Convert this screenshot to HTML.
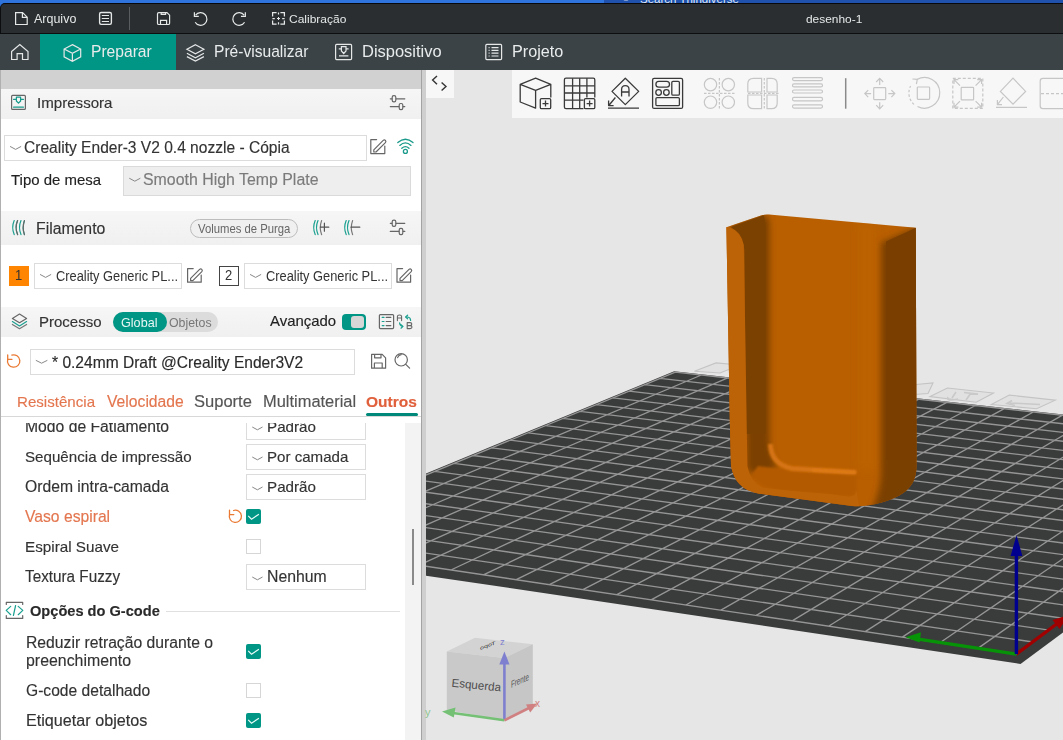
<!DOCTYPE html>
<html><head><meta charset="utf-8">
<style>
*{margin:0;padding:0;box-sizing:border-box}
html,body{width:1063px;height:740px;overflow:hidden;background:#e6e6e6;font-family:"Liberation Sans",sans-serif;position:relative}
.a{position:absolute}
.t{position:absolute;white-space:nowrap;line-height:1}
svg{position:absolute;overflow:visible}
#blue{left:0;top:0;width:1063px;height:10px;background:#2f73dc}
#blue2{left:604px;top:0;width:459px;height:10px;background:#1f51ad}
#title{left:0;top:3px;width:1063px;height:31px;background:#2a2e30;border-top:1px solid #06080b;border-left:1px solid #0c0d0e;border-bottom:1px solid #0c0e0f;border-top-left-radius:5px}
#tabs{left:0;top:34px;width:1063px;height:36px;background:#3b4346}
#tealtab{left:40px;top:34px;width:136px;height:36px;background:#009685}
.tt{color:#e9ecec;font-size:15.5px}
.mt{color:#e6e8e8;font-size:12.2px}
#panel{left:0;top:70px;width:421px;height:670px;background:#fff;border-left:1px solid #b0b0b0}
#graybar{left:1px;top:70px;width:420px;height:19px;background:#d1d1d1}
.hdr{left:1px;width:420px;background:linear-gradient(#f6f6f6,#f0f0f0)}
.txt{color:#333;font-size:15px;-webkit-text-stroke:0.15px currentColor}
.combo{position:absolute;border:1px solid #dcdcdc;background:#fff}
#pborder{left:421px;top:70px;width:1px;height:670px;background:#a3a3a3}
#pborder2{left:422px;top:70px;width:4px;height:670px;background:#cfcfcf}
#view{left:426px;top:70px;width:637px;height:670px;background:#e6e6e6;overflow:hidden}
.ic{stroke:#e6e8e8;fill:none;stroke-width:1.2}
.gi{stroke:#555;fill:none;stroke-width:1.2}
.teal{stroke:#1a9a8a}
.orange{color:#e3764f}
.cb{position:absolute;width:15px;height:15px;border:1px solid #d6d6d6;background:#fff}
.cbc{position:absolute;width:15px;height:15px;background:#009685;border-radius:2px}
</style></head><body>
<div class="a" id="blue"></div>
<div class="a" id="blue2"></div>
<div class="a" style="left:640px;top:-7.5px;font-size:11.5px;color:#dfe8f5;white-space:nowrap;line-height:12px">Search Thingiverse</div>
<svg style="left:0;top:0" width="700" height="4"><circle cx="626" cy="-5" r="5" fill="none" stroke="#dfe8f5" stroke-width="1.2"/></svg>
<div class="a" id="title"></div>
<div class="a" id="tabs"></div>
<div class="a" id="tealtab"></div>

<!-- title bar items -->
<svg style="left:0;top:0" width="300" height="34">
 <g class="ic">
  <path d="M15.6 12.6h7l4.6 4.6v7.3h-11.6z M22.4 12.6v4.8h4.8"/>
  <rect x="99.6" y="12.5" width="11.8" height="11.8" rx="1.5" stroke-width="1.35"/>
  <path d="M101.8 15.5h7.2 M101.8 18.5h7.2 M101.8 21.5h7.2" stroke-width="1.1"/>
  <path d="M158.8 12.6h8.2l2.6 2.6v8q0 1.3-1.3 1.3h-9.5q-1.3 0-1.3-1.3v-9.3q0-1.3 1.3-1.3z M161.2 12.6v1.8h4.4v-1.8 M160.5 24.5v-4.2h6.1v4.2"/>
  <path d="M195.6 15.2A6.3 6.3 0 1 1 195.2 22.2 M194.4 12.2V16.4H198.8"/>
  <path d="M244.15 15.2A6.3 6.3 0 1 0 244.55 22.2 M245.35 12.2V16.4H240.95"/>
  <path d="M272.6 16.6v-4h4 M280.4 12.6h4v4 M284.4 20.4v3.8h-4 M276.6 24.2h-4v-3.8 M278.5 12.4v2.2 M278.5 22.2v2.2 M272.4 18.5h2.4 M282.2 18.5h2.4" stroke-width="1.25"/>
  <path d="M278.5 17v3 M277 18.5h3" stroke-width="1"/>
 </g>
</svg>
<div class="t mt" style="left:34.20px;top:13.35px;font-size:12.30px;transform:scaleX(1.0150);transform-origin:0 0">Arquivo</div>
<div class="t mt" style="left:289.00px;top:13.15px;font-size:11.70px;transform:scaleX(1.0260);transform-origin:0 0">Calibração</div>
<div class="t mt" style="left:806.00px;top:13.15px;font-size:11.70px;transform:scaleX(1.0190);transform-origin:0 0">desenho-1</div>
<div class="a" style="left:129px;top:7px;width:1px;height:23px;background:#585d5f"></div>

<!-- tab bar items -->
<svg style="left:0;top:0" width="560" height="70">
 <g class="ic">
  <path d="M11.6 51.5l8.2-7l8.2 7v8h-5.5v-5.8h-5.4v5.8h-5.5z"/>
  <path d="M72.4 44.6l8.3 4.4v7.9l-8.3 4.4l-8.3-4.4v-7.9z M64.1 49l8.3 4.3l8.3-4.3 M72.4 53.3v7.9"/>
  <path d="M195.4 44.8l8.5 4.5l-8.5 4.5l-8.5-4.5z M186.9 53.2l8.5 4.5l8.5-4.5 M186.9 56.6l8.5 4.5l8.5-4.5"/>
  <rect x="335.6" y="44.4" width="16" height="15.2" rx="1"/>
  <path d="M339 55.8h9.4 M338.8 48.8h2.6 M346 48.8h2.6 M341.4 46.6h4.6v4.4l-2.3 2.5l-2.3-2.5z"/>
  <rect x="485.8" y="44.4" width="15.8" height="15.2" rx="1"/>
  <path d="M491.5 47.6h7 M491.5 50.4h7 M491.5 53.2h7 M491.5 56h7 M488.6 47.6h1 M488.6 50.4h1 M488.6 53.2h1 M488.6 56h1"/>
 </g>
</svg>
<div class="t tt" style="left:91.00px;top:43.28px;font-size:16.43px;transform:scaleX(0.9509);transform-origin:0 0">Preparar</div>
<div class="t tt" style="left:214.40px;top:43.28px;font-size:16.43px;transform:scaleX(0.9491);transform-origin:0 0">Pré-visualizar</div>
<div class="t tt" style="left:362.00px;top:43.28px;font-size:16.43px;transform:scaleX(1.0028);transform-origin:0 0">Dispositivo</div>
<div class="t tt" style="left:512.40px;top:43.28px;font-size:16.43px;transform:scaleX(0.9849);transform-origin:0 0">Projeto</div>

<!-- panel -->
<div class="a" id="panel"></div>
<div class="a" id="graybar"></div>
<div class="a hdr" style="top:89px;height:30px"></div>
<div class="t txt" style="left:36.60px;top:95.24px;font-size:15.52px;transform:scaleX(0.9729);transform-origin:0 0">Impressora</div>

<div class="combo" style="left:4px;top:135px;width:363px;height:26px"></div>
<div class="t txt" style="left:24.30px;top:139.48px;font-size:16.04px;transform:scaleX(0.9710);transform-origin:0 0">Creality Ender-3 V2 0.4 nozzle - Cópia</div>
<div class="t txt" style="left:11.30px;top:172.24px;color:#222;font-size:15.52px;transform:scaleX(0.9643);transform-origin:0 0">Tipo de mesa</div>
<div class="combo" style="left:123px;top:166px;width:288px;height:30px;background:#eeeeee;border-color:#dadada"></div>
<div class="t txt" style="left:142.90px;top:171.38px;color:#7b7b7b;font-size:16.25px;transform:scaleX(0.9778);transform-origin:0 0">Smooth High Temp Plate</div>

<div class="a hdr" style="top:211px;height:34px"></div>
<div class="t txt" style="left:36.30px;top:220.48px;font-size:16.04px;transform:scaleX(0.9845);transform-origin:0 0">Filamento</div>
<div class="a" style="left:190px;top:219px;width:108px;height:19px;border:1px solid #bdbdbd;border-radius:10px;background:#f0f0f0"></div>
<div class="t" style="left:198.40px;top:223.45px;font-size:12.10px;color:#666;transform:scaleX(0.9343);transform-origin:0 0">Volumes de Purga</div>

<div class="a" style="left:9px;top:266px;width:20px;height:20px;background:#ff8400"></div>
<div class="t" style="left:15.00px;top:268.48px;font-size:14.04px;color:#333;transform:scaleX(0.9259);transform-origin:0 0">1</div>
<div class="combo" style="left:34px;top:263px;width:148px;height:26px"></div>
<div class="t" style="left:55.50px;top:269.59px;font-size:13.82px;color:#333;transform:scaleX(0.9296);transform-origin:0 0">Creality Generic PL...</div>
<div class="a" style="left:219px;top:266px;width:20px;height:20px;border:1px solid #444;background:#fff"></div>
<div class="t" style="left:225.00px;top:268.48px;font-size:14.04px;color:#333;transform:scaleX(0.9259);transform-origin:0 0">2</div>
<div class="combo" style="left:244px;top:263px;width:148px;height:26px"></div>
<div class="t" style="left:265.50px;top:269.59px;font-size:13.82px;color:#333;transform:scaleX(0.9296);transform-origin:0 0">Creality Generic PL...</div>

<div class="a hdr" style="top:307px;height:30px"></div>
<div class="t txt" style="left:38.80px;top:314.44px;font-size:15.11px;transform:scaleX(0.9923);transform-origin:0 0">Processo</div>
<div class="a" style="left:113px;top:312px;width:105px;height:20px;border-radius:10px;background:#dcdcdc"></div>
<div class="a" style="left:113px;top:312px;width:54px;height:20px;border-radius:10px;background:#009685"></div>
<div class="t" style="left:121.00px;top:316.52px;font-size:12.96px;color:#e8f6f4;transform:scaleX(0.9741);transform-origin:0 0">Global</div>
<div class="t" style="left:168.80px;top:316.52px;font-size:12.96px;color:#777;transform:scaleX(0.9537);transform-origin:0 0">Objetos</div>
<div class="t txt" style="left:270.30px;top:313.34px;font-size:15.32px;color:#222;transform:scaleX(0.9749);transform-origin:0 0">Avançado</div>
<div class="a" style="left:342px;top:314px;width:24px;height:16px;border-radius:4px;background:#009685"></div>
<div class="a" style="left:351px;top:316px;width:13px;height:12px;border-radius:3px;background:#d6d6d6"></div>

<div class="combo" style="left:30px;top:349px;width:325px;height:26px"></div>
<div class="t txt" style="left:51.80px;top:355.13px;font-size:15.73px;color:#2a2a2a;transform:scaleX(0.9903);transform-origin:0 0">* 0.24mm Draft @Creality Ender3V2</div>

<div class="t txt orange" style="left:16.60px;top:394.34px;font-size:15.32px;transform:scaleX(0.9865);transform-origin:0 0">Resistência</div>
<div class="t txt orange" style="left:106.70px;top:394.08px;font-size:15.84px;transform:scaleX(0.9913);transform-origin:0 0">Velocidade</div>
<div class="t txt" style="left:193.60px;top:394.08px;font-size:15.84px;color:#555;transform:scaleX(1.0444);transform-origin:0 0">Suporte</div>
<div class="t txt" style="left:262.80px;top:393.72px;font-size:16.56px;color:#555;transform:scaleX(0.9932);transform-origin:0 0">Multimaterial</div>
<div class="t txt" style="left:366.00px;top:394.29px;font-size:15.42px;font-weight:bold;color:#e0603c;transform:scaleX(1.0077);transform-origin:0 0">Outros</div>
<div class="a" style="left:366px;top:413px;width:52px;height:3px;border-radius:2px;background:#00897a"></div>
<div class="a" style="left:1px;top:416px;width:420px;height:1px;background:#d8d8d8"></div>

<!-- settings list -->
<div class="a" style="left:1px;top:423px;width:404px;height:317px;overflow:hidden">
 <div class="t txt" style="left:24.40px;top:-4.52px;font-size:16.04px;transform:scaleX(0.9797);transform-origin:0 0">Modo de Fatiamento</div>
 <div class="t txt" style="left:24.40px;top:26.24px;font-size:15.52px;transform:scaleX(0.9758);transform-origin:0 0">Sequência de impressão</div>
 <div class="t txt" style="left:24.40px;top:55.48px;font-size:16.04px;transform:scaleX(0.9797);transform-origin:0 0">Ordem intra-camada</div>
 <div class="t txt orange" style="left:24.40px;top:86.13px;font-size:15.73px;transform:scaleX(0.9971);transform-origin:0 0">Vaso espiral</div>
 <div class="t txt" style="left:24.40px;top:116.24px;font-size:15.52px;transform:scaleX(0.9816);transform-origin:0 0">Espiral Suave</div>
 <div class="t txt" style="left:24.40px;top:146.13px;font-size:15.73px;transform:scaleX(0.9720);transform-origin:0 0">Textura Fuzzy</div>
 <div class="combo" style="left:245px;top:-7px;width:120px;height:24px"></div>
 <div class="t txt" style="left:265.50px;top:-3.71px;font-size:15.42px;transform:scaleX(0.9865);transform-origin:0 0">Padrão</div>
 <div class="combo" style="left:245px;top:21px;width:120px;height:26px"></div>
 <div class="t txt" style="left:265.50px;top:26.29px;font-size:15.42px;transform:scaleX(0.9797);transform-origin:0 0">Por camada</div>
 <div class="combo" style="left:245px;top:51px;width:120px;height:26px"></div>
 <div class="t txt" style="left:265.50px;top:56.29px;font-size:15.42px;transform:scaleX(0.9865);transform-origin:0 0">Padrão</div>
 <div class="combo" style="left:245px;top:141px;width:120px;height:26px"></div>
 <div class="t txt" style="left:265.50px;top:146.08px;font-size:15.84px;transform:scaleX(0.9971);transform-origin:0 0">Nenhum</div>
 <div class="cbc" style="left:245px;top:86px"><svg style="left:0;top:0" width="15" height="15"><path d="M2.2 6.8l3.3 3.4l7.4-5" fill="none" stroke="#e6fbf8" stroke-width="1.2"/></svg></div>
 <div class="cb" style="left:245px;top:116px"></div>
 <div class="t txt" style="left:29.00px;top:180.44px;font-weight:bold;font-size:15.11px;color:#2a2a2a;transform:scaleX(0.9662);transform-origin:0 0">Opções do G-code</div>
 <div class="a" style="left:165px;top:188px;width:234px;height:1px;background:#e0e0e0"></div>
 <div class="t txt" style="left:24.50px;top:211.48px;font-size:16.04px;transform:scaleX(0.9807);transform-origin:0 0">Reduzir retração durante o</div>
 <div class="t txt" style="left:24.50px;top:229.43px;font-size:16.15px;transform:scaleX(0.9845);transform-origin:0 0">preenchimento</div>
 <div class="t txt" style="left:24.50px;top:259.48px;font-size:16.04px;transform:scaleX(0.9739);transform-origin:0 0">G-code detalhado</div>
 <div class="t txt" style="left:24.50px;top:289.27px;font-size:16.46px;transform:scaleX(0.9836);transform-origin:0 0">Etiquetar objetos</div>
 <div class="cbc" style="left:245px;top:221px"><svg style="left:0;top:0" width="15" height="15"><path d="M2.2 6.8l3.3 3.4l7.4-5" fill="none" stroke="#e6fbf8" stroke-width="1.2"/></svg></div>
 <div class="cb" style="left:245px;top:260px"></div>
 <div class="cbc" style="left:245px;top:290px"><svg style="left:0;top:0" width="15" height="15"><path d="M2.2 6.8l3.3 3.4l7.4-5" fill="none" stroke="#e6fbf8" stroke-width="1.2"/></svg></div>
</div>
<div class="a" style="left:405px;top:423px;width:16px;height:317px;background:#f3f3f3"></div>
<div class="a" style="left:412px;top:529px;width:2px;height:56px;background:#8a8a8a"></div>


<!-- panel icons -->
<svg style="left:0;top:0" width="426" height="740">
 <g fill="none" stroke-width="1.2" stroke-linecap="round" stroke-linejoin="round">
  <!-- printer icon -->
  <rect x="11.6" y="95.4" width="13.8" height="14" rx="1" stroke="#666"/>
  <path d="M13.6 99.4h2.8 M20.6 99.4h2.8 M16.4 97.2h4.2v3.8l-2.1 2.2l-2.1-2.2z M13.6 107.2h9.8" stroke="#14998a"/>
  <!-- settings sliders (printer) -->
  <path d="M390.3 98.8H404.8 M390.3 106.6H404.8" stroke="#666"/>
  <rect x="392.2" y="95.6" width="3.6" height="6.2" rx="1.6" fill="#f3f3f3" stroke="#666"/>
  <rect x="399.2" y="103.5" width="3.6" height="6.2" rx="1.6" fill="#f3f3f3" stroke="#666"/>
  <!-- combo chevrons -->
  <path d="M10.4 146.6l5.2 2.8l5.2-2.8" stroke="#888" stroke-width="1"/>
  <path d="M129.6 178.4l5.2 2.8l5.2-2.8" stroke="#888" stroke-width="1"/>
  <!-- edit icon -->
  <path d="M376.6 139.6h-5.8v14h14v-7.6" stroke="#666"/>
  <path d="M373.8 149.8l9.4-9.4q1.2-1 2.2 0q1 1-0 2.2l-9.4 9.4h-2.2z" stroke="#666"/>
  <!-- wifi -->
  <path d="M397.8 142.6q7.6-6.8 15.2 0 M399.8 145.4q5.6-5 11.2 0 M401.8 148.2q3.6-3.2 7.2 0" stroke="#1a9a8a" stroke-width="1.3"/>
  <circle cx="405.4" cy="151.4" r="2" stroke="#1a9a8a" stroke-width="1.3"/>
  <!-- filament icon -->
  <path d="M14.2 220.6q-3 7 0 14 M17.6 220.6q-3 7 0 14 M21 220.6q-3 7 0 14 M24.4 220.6q-2.4 7 0 14" stroke="#1aa090"/>
  <path d="M17.6 220.6q-3 7 0 14 M24.4 220.6q-2.4 7 0 14" stroke="#666"/>
  <!-- filament add/remove -->
  <path d="M315.2 220.6q-3 7 0 14 M318 220.6q-3 7 0 14" stroke="#1aa090"/>
  <path d="M321.6 220.6q-2.6 7 0 14" stroke="#777"/>
  <path d="M320.4 227.2h8.4 M324.4 223.2v8" stroke="#555"/>
  <path d="M346.2 220.6q-3 7 0 14 M349 220.6q-3 7 0 14" stroke="#1aa090"/>
  <path d="M352.6 220.6q-2.6 7 0 14" stroke="#777"/>
  <path d="M351 227.2h8.8" stroke="#555"/>
  <!-- settings sliders (filament) -->
  <path d="M390.3 223.3H404.8 M390.3 231.4H404.8" stroke="#666"/>
  <rect x="392.2" y="220.2" width="3.6" height="6.2" rx="1.6" fill="#f2f2f2" stroke="#666"/>
  <rect x="399.2" y="228.4" width="3.6" height="6.2" rx="1.6" fill="#f2f2f2" stroke="#666"/>
  <!-- filament combos chevrons + edit -->
  <path d="M40.4 274.6l5.2 2.8l5.2-2.8" stroke="#888" stroke-width="1"/>
  <path d="M250.4 274.6l5.2 2.8l5.2-2.8" stroke="#888" stroke-width="1"/>
  <path d="M193.2 268.6h-5.6v13.6h13.6v-7.2" stroke="#666"/>
  <path d="M190.6 278.4l9-9q1.2-1 2.2 0q1 1 0 2.2l-9 9h-2.2z" stroke="#666"/>
  <path d="M402.6 268.6h-5.6v13.6h13.6v-7.2" stroke="#666"/>
  <path d="M400 278.4l9-9q1.2-1 2.2 0q1 1 0 2.2l-9 9h-2.2z" stroke="#666"/>
  <!-- layers icon -->
  <path d="M12.4 318.4l7.1-4.4l7.1 4.4l-7.1 4.3z" stroke="#666"/>
  <path d="M12.4 321.6l7.1 4.4l7.1-4.4" stroke="#1aa090"/>
  <path d="M12.4 324.4l7.1 4.3l7.1-4.3" stroke="#777"/>
  <!-- list icon -->
  <rect x="379.4" y="314.6" width="14.2" height="14" rx="1" stroke="#666"/>
  <path d="M382.2 317.4h1.8 M382.2 321.5h1.8 M382.2 325.6h1.8" stroke="#1aa090"/>
  <path d="M386.2 317.4h4.6 M386.2 321.5h4.6 M386.2 325.6h4.6" stroke="#666"/>
  <!-- AB icon -->
  <path d="M397.4 320.6v-4q0-1.6 2.1-1.6q2.1 0 2.1 1.6v4 M397.4 318h4.2" stroke="#666" stroke-width="1.1"/>
  <path d="M407.2 328.6v-6h2.8q1.8 0 1.8 1.5q0 1.5-1.8 1.5h-2.8 M410 325.6q2 0 2 1.5q0 1.5-2 1.5h-2.8" stroke="#666" stroke-width="1.1"/>
  <path d="M410.6 320.4q0-3-3-3.4 M405.6 317l2-1.8 M405.6 317l2 1.8 M399.6 322.8q0 3 3.2 3.6 M403 326.4l-2 1.8 M403 326.4l-2-1.8" stroke="#1aa090" stroke-width="1.2"/>
  <!-- reset orange -->
  <path d="M7.7 359.3A6.2 6.2 0 1 0 11.8 355.1" stroke="#ea7a33" stroke-width="1.3"/>
  <path d="M7.7 354.9V359.3H12" stroke="#ea7a33" stroke-width="1.3"/>
  <path d="M36.2 360.5l5.4 2.7l5.4-2.7" stroke="#888" stroke-width="1"/>
  <!-- save -->
  <path d="M371.6 354.4h10.6l3.4 3.4v10.4h-14z M374.6 354.4v3.4h6.4v-3.4 M374.4 368.2v-5.2h7.8v5.2" stroke="#666"/>
  <!-- search -->
  <circle cx="401.2" cy="359.8" r="6.2" stroke="#666"/>
  <path d="M405.8 364.4l3.8 3.8 M397.6 357.6q1-2.6 3.6-3" stroke="#666"/>
  <!-- row chevrons -->
  <path d="M252.6 427.2l4.8 2.6l4.8-2.6" stroke="#888" stroke-width="1"/>
  <path d="M252.6 457.2l4.8 2.6l4.8-2.6" stroke="#888" stroke-width="1"/>
  <path d="M252.6 487.2l4.8 2.6l4.8-2.6" stroke="#888" stroke-width="1"/>
  <path d="M252.6 577.2l4.8 2.6l4.8-2.6" stroke="#888" stroke-width="1"/>
  <!-- reset orange (vaso) -->
  <path d="M229.5 514.6A6.1 6.1 0 1 0 233.6 510.5" stroke="#ea7a33" stroke-width="1.3"/>
  <path d="M229.5 510.2V514.6H233.8" stroke="#ea7a33" stroke-width="1.3"/>
  <!-- gcode icon -->
  <path d="M6.3 604.4v-2h16.4v2 M6.3 615.6v2.8h16.4v-2.8" stroke="#666"/>
  <path d="M10.7 606.4l-4.5 4l4.5 4.3 M18.2 606.4l4.6 4l-4.6 4.3 M15.6 605.5l-2.2 10" stroke="#1aa090"/>
 </g>
</svg>
<div class="a" id="pborder"></div>
<div class="a" id="pborder2"></div>
<div class="a" id="view"></div>
<svg style="left:426px;top:70px" width="637" height="670" viewBox="426 70 637 670"><defs><clipPath id="vc"><rect x="426" y="70" width="637" height="670"/></clipPath><linearGradient id="gl" x1="0" x2="1" y1="0" y2="0"><stop offset="0" stop-color="#7a3f00"/><stop offset="0.7" stop-color="#7e4200"/><stop offset="1" stop-color="#b95f00"/></linearGradient><linearGradient id="gr" x1="0" x2="1" y1="0" y2="0"><stop offset="0" stop-color="#b55c00"/><stop offset="0.25" stop-color="#7c4100"/><stop offset="1" stop-color="#7a3f00"/></linearGradient><linearGradient id="gfl" x1="0" x2="0" y1="0" y2="1"><stop offset="0" stop-color="#7c4100"/><stop offset="1" stop-color="#b05800"/></linearGradient></defs><g clip-path="url(#vc)">
<polygon fill="#3a3b3b" points="674.2,371.2 1310.5,442.0 1310.5,450.0 1020.5,663.9 258.0,550.7 258.0,542.7"/>
<g fill="#e1e1e1" stroke="#c4c4c4" stroke-width="1.1"><path d="M916 384.5 L933 383 L928 393.5 L914 394.5z"/><path d="M930.1 396.6 L947.4 388 L993.5 393 L976.2 402.3z"/><path d="M991.3 404.5 L1009.3 395.1 L1055.3 400.2 L1036.6 408.8z"/><path d="M694.4 371.2 L716 362.9 L740 365 L720 373z"/></g>
<g fill="none" stroke="#c9c9c9" stroke-width="1.6"><path d="M948 397 q-2 3 4 3 l6-1 M956 392 l-4 6 M964 392.5 l14 1.6 M971 393 l-5 7"/><path d="M1012 400.5 l-5 3 l8 2 M1010 403 l30 1.5"/></g>
<path stroke="#959595" stroke-width="1.35" fill="none" d="M1016.3,654.1L263.3,542.1M1016.3,654.1L1306.3,442.4M1032.9,642.0L286.4,532.6M977.9,648.4L1274.8,438.9M1049.2,630.1L309.0,523.3M939.9,642.7L1243.7,435.4M1065.0,618.5L331.1,514.2M902.3,637.1L1212.8,432.0M1080.4,607.3L352.7,505.3M865.2,631.6L1182.2,428.6M1095.5,596.3L373.8,496.5M828.5,626.2L1151.9,425.2M1110.3,585.5L394.5,488.0M792.2,620.8L1121.8,421.8M1124.6,575.0L414.8,479.6M756.3,615.4L1092.0,418.5M1138.7,564.7L434.7,471.4M720.9,610.2L1062.5,415.2M1152.4,554.7L454.1,463.4M685.8,605.0L1033.3,412.0M1165.9,544.9L473.2,455.5M651.1,599.8L1004.3,408.7M1179.0,535.3L491.9,447.8M616.8,594.7L975.5,405.5M1191.8,525.9L510.2,440.2M582.9,589.7L947.0,402.4M1204.4,516.8L528.2,432.8M549.4,584.7L918.8,399.2M1216.7,507.8L545.8,425.6M516.2,579.7L890.8,396.1M1228.7,499.0L563.0,418.4M483.4,574.9L863.0,393.0M1240.5,490.4L580.0,411.4M450.9,570.0L835.5,389.9M1252.0,482.0L596.6,404.6M418.8,565.3L808.2,386.9M1263.3,473.7L612.9,397.8M387.1,560.5L781.2,383.9M1274.4,465.7L629.0,391.2M355.6,555.9L754.4,380.9M1285.3,457.7L644.7,384.7M324.6,551.2L727.8,377.9M1295.9,450.0L660.1,378.4M293.8,546.7L701.4,375.0M1306.3,442.4L675.3,372.1M263.3,542.1L675.3,372.1"/>
<path d="M1016.3 654.1 L1070 614" stroke="#a00000" stroke-width="3.2"/><path d="M1052.5 620 L1059.5 629 L1069 615z" fill="#a00000"/>
<path d="M1016.3 654.1 L915 638.6" stroke="#079307" stroke-width="3.2"/><path d="M905.5 637.2 L921 632.2 L919.6 642.4z" fill="#079307"/>
<path d="M1016.4 654.1 V553" stroke="#00008f" stroke-width="3.4"/><path d="M1016.5 535.3 L1022.4 556 L1010.6 556z" fill="#00008f"/>
<g><defs><clipPath id="vs"><path d="M726.4 227.2 L761 215.6 Q765 214.2 769 214.6 L915.8 227.8 L916.5 466 C916.5 489 901 498 874 504.5 Q863 507 852 506 L758 493.5 Q735 489 731 466 L729.8 420 Z"/></clipPath><filter id="b2" x="-50%" y="-50%" width="200%" height="200%"><feGaussianBlur stdDeviation="2.2"/></filter><filter id="b3" x="-50%" y="-50%" width="200%" height="200%"><feGaussianBlur stdDeviation="3.2"/></filter><filter id="b1" x="-50%" y="-50%" width="200%" height="200%"><feGaussianBlur stdDeviation="1.3"/></filter><filter id="b4" x="-50%" y="-50%" width="200%" height="200%"><feGaussianBlur stdDeviation="4"/></filter></defs><path fill="#b95f00" d="M726.4 227.2 L761 215.6 Q765 214.2 769 214.6 L915.8 227.8 L916.5 466 C916.5 489 901 498 874 504.5 Q863 507 852 506 L758 493.5 Q735 489 731 466 L729.8 420 Z"/><g clip-path="url(#vs)"><path fill="#c06604" filter="url(#b4)" d="M858 222 L876 224 L876 470 L858 470 Z" opacity="0.5"/><path fill="#7a3f00" filter="url(#b3)" d="M881 242.6 L920 226 L922 520 L866 520 Q879 500 881 476 Z"/><path fill="#7a3f00" d="M886 241.5 L920 226 L922 460 L886 460 Z"/><path fill="#7b4100" filter="url(#b3)" d="M730 227 L764.2 214.8 Q769 216 769.5 224 L769.5 440 Q770 458 778 466 L760 476 L746.5 470 L745 250 Z"/><path fill="#7b4100" d="M731 227 L764 215.2 L765.5 225 L765.5 434 L746 434 L744.5 250 Q744 236 731 227 Z"/><path fill="#b35a00" filter="url(#b1)" d="M758 466 Q772 468 792 471 L856.8 474 L856.8 488 Q856 496 848 496.5 L775 489.5 Q757 486 752 474 Z"/><path fill="none" stroke="#d67412" stroke-width="5" filter="url(#b1)" d="M770.5 444 Q771 464 792 468.5 L856 472.5"/><path fill="none" stroke="#e07c18" stroke-width="2.5" filter="url(#b1)" d="M812 470 L856 472.6"/><path fill="#bc6207" d="M720 226 L729.2 227.2 Q741 231 743.8 245 L747.4 466 Q750 482 763 487.5 Q790 491 830 494 L848 496.5 Q856 497 856.8 490 L856.8 492 L860 510 L720 510 Z"/></g></g>
</g></svg>
<svg style="left:0;top:0" width="1063" height="740">
<polygon points="446.8,651.6 475,637.8 532.8,644.3 504.4,658" fill="#d3d3d3"/>
<polygon points="446.8,651.6 504.4,658 504.4,720.6 446.8,710" fill="#c9c9c9"/>
<polygon points="504.4,658 532.8,644.3 532.8,706 504.4,720.6" fill="#c6c6c6"/>
<text x="451.5" y="689" font-size="11.6" fill="#4e4e4e" transform="rotate(5.5 476 685)" font-family="Liberation Sans">Esquerda</text>
<g transform="translate(511 688) matrix(0.62 -0.28 0 1 0 0)"><text x="0" y="0" font-size="10" fill="#555" font-family="Liberation Sans">Frente</text></g>
<g transform="translate(480 650) matrix(0.8 -0.3 0 0.55 0 0)"><text x="0" y="0" font-size="9" fill="#333" font-family="Liberation Sans" transform="scale(-1 1)" text-anchor="end">Topo</text></g>
<path d="M504.4 720 V664" stroke="#7f7fcf" stroke-width="2.6"/><path d="M504.4 651.5 L509.5 664.5 L499.3 664.5z" fill="#7f7fcf"/>
<text x="500" y="645" font-size="9.5" fill="#7f7fcf" font-family="Liberation Sans">z</text>
<path d="M504.4 720.3 L453 713" stroke="#74c074" stroke-width="2.6"/><path d="M442 711.5 L455.5 707.4 L453.8 717.6z" fill="#74c074"/>
<text x="425" y="716" font-size="11" fill="#8fc48f" font-family="Liberation Sans">y</text>
<path d="M504.4 720.3 L530 707.5" stroke="#d08080" stroke-width="2.6"/><path d="M537.2 703.6 L530.2 712.4 L526 704.6z" fill="#d08080"/>
<text x="535" y="707" font-size="10" fill="#d08080" font-family="Liberation Sans">x</text>
</svg>
<div class="a" style="left:426px;top:70px;width:28px;height:28px;background:#f7f7f7"></div>
<div class="a" style="left:512px;top:70px;width:551px;height:48px;background:#f7f7f7"></div>
<svg style="left:0;top:0" width="1063" height="130">
<path d="M437 76 L432.6 80 L437 84.2 M441.6 82.4 L446 86.5 L441.6 90.6" stroke="#333" stroke-width="1.4" fill="none"/>
<g fill="none" stroke="#3a3a3a" stroke-width="1.3" stroke-linejoin="round">
 <path d="M520.2 84.4 L535.6 78.2 L550.8 84.4 L535.6 90.3 Z M520.2 84.4 V102 L535.6 108.2 V90.3 M550.8 84.4 V97.5"/>
 <rect x="540.3" y="98.6" width="10.4" height="10" rx="1.2"/><path d="M545.5 100.6 v6 M542.5 103.6 h6"/>
 <path d="M583.5 108.6 H566 Q564.4 108.6 564.4 107 V79.8 Q564.4 78.2 566 78.2 H593.2 Q594.8 78.2 594.8 79.8 V97.6"/>
 <path d="M572.6 78.2 V108.6 M579.7 78.2 V108.6 M586.9 78.2 V97.6 M564.4 85.9 H594.8 M564.4 93 H594.8 M564.4 100.2 H583.5"/>
 <rect x="584.4" y="98.6" width="10.4" height="10" rx="1.2"/><path d="M589.6 100.6 v6 M586.6 103.6 h6"/>
 <path d="M625.3 78.2 L638.7 91.4 L625.3 104.6 L612 91.4 Z M608 108.2 H639 M615.4 97.5 L608.8 105.5 M608.6 100.6 V105.6 H613.6"/>
 <path d="M621.6 96.5 V89.5 Q621.6 85.6 625.3 85.6 Q629 85.6 629 89.5 V96.5 M621.6 92 H629"/>
 <rect x="652.6" y="78.4" width="30" height="30" rx="1.5"/>
 <rect x="655.9" y="81.4" width="13.6" height="5.8" rx="2.9"/>
 <circle cx="658.6" cy="92.5" r="2.8"/><circle cx="666.4" cy="92.5" r="2.8"/>
 <rect x="671.8" y="81.4" width="7.6" height="13.8" rx="1.2"/>
 <rect x="655.9" y="97.6" width="23.5" height="8" rx="1.2"/>
</g>
<g fill="none" stroke="#c6c6c6" stroke-width="1.2">
 <circle cx="710.5" cy="84.6" r="6.2"/><circle cx="728.3" cy="84.6" r="6.2"/><circle cx="710.5" cy="102.2" r="6.2"/><circle cx="728.3" cy="102.2" r="6.2"/>
 <path d="M719.4 78 V109 M704 93.4 H735" stroke-dasharray="2.5 1.5"/>
 <path d="M747.8 92 V84 Q747.8 78.3 753.5 78.3 H761.6 V92 Z M777.2 92 V84 Q777.2 78.3 771.5 78.3 H767 V92 Z M747.8 95 V103 Q747.8 108.7 753.5 108.7 H761.6 V95 Z M777.2 95 V103 Q777.2 108.7 771.5 108.7 H767 V95 Z" />
 <path d="M764.3 78 V109 M748 93.4 H779" stroke-dasharray="2.5 1.5"/>
 <rect x="792.5" y="77.6" width="30" height="3" rx="1.5"/><rect x="792.5" y="83.9" width="30" height="3" rx="1.5"/><rect x="792.5" y="90" width="30" height="3" rx="1.5"/><rect x="792.5" y="97.4" width="30" height="3.4" rx="1.5"/><rect x="792.5" y="104.9" width="30" height="3.2" rx="1.5"/>
 <path d="M845.7 78.2 V108.7" stroke="#8a8a8a" stroke-width="1.5"/>
 <rect x="873.7" y="87.6" width="12" height="12" rx="0.8"/>
 <path d="M879.7 85 V78.6 M876.2 82 L879.7 78.4 L883.2 82 M879.7 102.2 V108.6 M876.2 105.2 L879.7 108.8 L883.2 105.2 M871.1 93.6 H864.8 M868.2 90.1 L864.8 93.6 L868.2 97.1 M888.3 93.6 H894.8 M891.4 90.1 L894.8 93.6 L891.4 97.1"/>
 <rect x="917.3" y="87" width="12.3" height="12.4" rx="0.8"/>
 <path d="M917 79.5 A15.3 15.3 0 1 1 917.5 106.5" />
 <path d="M914 104.4 A15.3 15.3 0 0 1 910.6 86" stroke-dasharray="2.5 2"/>
 <path d="M912.4 79 L917.3 79.3 L916.4 84.2"/>
 <rect x="952.8" y="78.4" width="30" height="30" stroke-dasharray="3 2"/>
 <rect x="961.2" y="87.4" width="12.4" height="12.4" rx="0.6"/>
 <path d="M954 79.6 L960 85.6 M954 84 V79.6 H958.4 M981.6 79.6 L975.6 85.6 M981.6 84 V79.6 H977.2 M954 107.2 L960 101.2 M954 102.8 V107.2 H958.4 M981.6 107.2 L975.6 101.2 M981.6 102.8 V107.2 H977.2"/>
 <path d="M1013 78.2 L1025.6 91.4 L1013 104.2 L1000.4 91.4 Z M996 107.4 H1027 M1003.4 97 L997.6 104.4 M997.4 100 V104.6 H1002"/>
 <path d="M1063 78.4 H1043 Q1040.2 78.4 1040.2 81 V106 Q1040.2 108.6 1043 108.6 H1063" /><path d="M1041 93.6 H1063" stroke-dasharray="3 2"/>
</g>
</svg>
</body></html>
